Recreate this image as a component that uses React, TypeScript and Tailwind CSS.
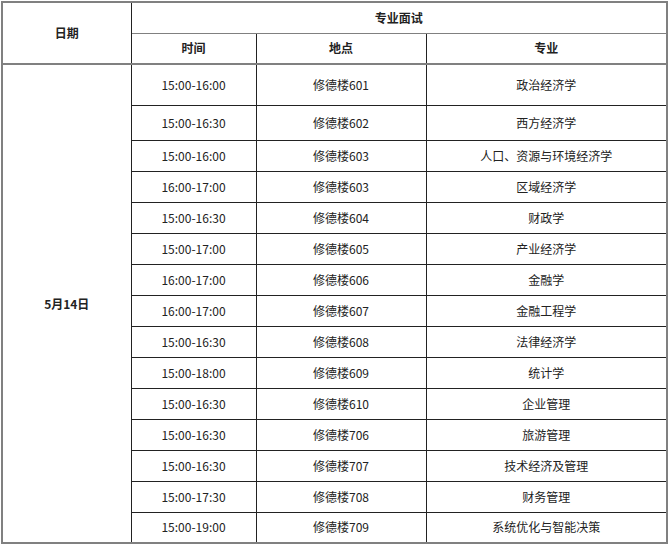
const rows = [
  ["15:00-16:00", "修德楼601", "政治经济学"],
  ["15:00-16:30", "修德楼602", "西方经济学"],
  ["15:00-16:00", "修德楼603", "人口、资源与环境经济学"],
  ["16:00-17:00", "修德楼603", "区域经济学"],
  ["15:00-16:30", "修德楼604", "财政学"],
  ["15:00-17:00", "修德楼605", "产业经济学"],
  ["16:00-17:00", "修德楼606", "金融学"],
  ["16:00-17:00", "修德楼607", "金融工程学"],
  ["15:00-16:30", "修德楼608", "法律经济学"],
  ["15:00-18:00", "修德楼609", "统计学"],
  ["15:00-16:30", "修德楼610", "企业管理"],
  ["15:00-16:30", "修德楼706", "旅游管理"],
  ["15:00-16:30", "修德楼707", "技术经济及管理"],
  ["15:00-17:30", "修德楼708", "财务管理"],
  ["15:00-19:00", "修德楼709", "系统优化与智能决策"],
];

const rowHeight = (i: number) =>
  i === 0 ? "h-[41px]" : i === 1 ? "h-[35px]" : "h-[31px]";

export default function App() {
  return (
    <div className="bg-white w-[670px] h-[546px] pl-px pt-px font-['Noto_Sans_CJK_SC','Noto_Sans',sans-serif] text-[12px] text-[#222]">
      <table className="table-fixed border-collapse w-[667px] border-2 border-[#808080] text-center">
        <colgroup>
          <col className="w-[129px]" />
          <col className="w-[125px]" />
          <col className="w-[170px]" />
          <col />
        </colgroup>
        <thead>
          <tr className="h-[31px]">
            <th rowSpan={2} className="border-r border-[#222] border-b-2 border-b-[#808080] font-bold">
              日期
            </th>
            <th colSpan={3} className="border-b border-b-[#808080] font-bold">
              专业面试
            </th>
          </tr>
          <tr className="h-[31px]">
            <th className="border-r border-[#222] border-b-2 border-b-[#808080] font-bold">时间</th>
            <th className="border-r border-[#222] border-b-2 border-b-[#808080] font-bold">地点</th>
            <th className="border-b-2 border-b-[#808080] font-bold">专业</th>
          </tr>
        </thead>
        <tbody>
          {rows.map((r, i) => (
            <tr key={i} className={rowHeight(i)}>
              {i === 0 && (
                <td rowSpan={rows.length} className="border-r border-[#222] font-bold">
                  5月14日
                </td>
              )}
              <td className="border-r border-b border-[#222]">{r[0]}</td>
              <td className="border-r border-b border-[#222]">{r[1]}</td>
              <td className="border-b border-[#222]">{r[2]}</td>
            </tr>
          ))}
        </tbody>
      </table>
    </div>
  );
}
